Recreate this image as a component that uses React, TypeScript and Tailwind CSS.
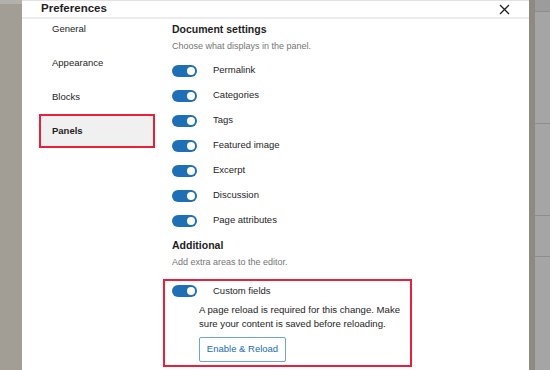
import React from 'react';

const docPanels = [
  'Permalink',
  'Categories',
  'Tags',
  'Featured image',
  'Excerpt',
  'Discussion',
  'Page attributes',
];

const navItems = ['General', 'Appearance', 'Blocks', 'Panels'];

function Toggle() {
  return (
    <div className="relative w-[25px] h-[12px] rounded-full bg-[#1e6fb5] shrink-0">
      <div className="absolute right-[2px] top-[2px] w-[8px] h-[8px] rounded-full bg-white" />
    </div>
  );
}

function ToggleRow({ label }: { label: string }) {
  return (
    <div className="flex items-center h-[25px] gap-[16px]">
      <Toggle />
      <span className="text-[9.5px] text-[#1e1e1e]">{label}</span>
    </div>
  );
}

export default function App() {
  return (
    <div
      className="flex w-[550px] h-[370px] overflow-hidden bg-[#a29e96]"
      style={{ fontFamily: '"Liberation Sans", Arial, sans-serif' }}
    >
      {/* backdrop, left */}
      <div className="w-[22px] shrink-0 flex flex-col">
        <div className="h-[4px] bg-[#b3b1ac]" />
        <div className="flex-1 bg-[#a29e96]" />
      </div>

      {/* modal */}
      <div className="w-[507px] shrink-0 bg-white flex flex-col border-t border-[#e2e2e2]">
        <div className="h-[18px] shrink-0 flex items-center justify-between pl-[19px] pr-[19px] border-b-2 border-[#ececec]">
          <span className="text-[11.5px] font-bold text-[#1e1e1e] leading-none">Preferences</span>
          <svg width="11" height="11" viewBox="0 0 11 11" className="text-[#1e1e1e]">
            <path d="M1 1L10 10M10 1L1 10" stroke="currentColor" strokeWidth="1.3" fill="none" />
          </svg>
        </div>

        <div className="flex flex-1">
          {/* nav */}
          <div className="w-[141px] shrink-0 pl-[17px] -mt-[7px] flex flex-col">
            {navItems.map((item) => {
              const active = item === 'Panels';
              return (
                <div
                  key={item}
                  className={
                    active
                      ? 'h-[34px] w-[116px] flex items-center pl-[11px] border-2 border-[#e8203c] bg-[#f0f0f0] text-[9.5px] font-bold text-[#1e1e1e]'
                      : 'h-[34px] w-[116px] flex items-center pl-[11px] border-2 border-transparent text-[9.5px] text-[#1e1e1e]'
                  }
                >
                  {item}
                </div>
              );
            })}
          </div>

          {/* content */}
          <div className="flex flex-col pl-[9px]">
            <div className="text-[10.5px] font-bold text-[#1e1e1e] leading-[20px] h-[20px]">Document settings</div>
            <div className="text-[9px] text-[#757575] leading-[14px] h-[14px]">Choose what displays in the panel.</div>
            <div className="mt-[5px] flex flex-col">
              {docPanels.map((p) => (
                <ToggleRow key={p} label={p} />
              ))}
            </div>
            <div className="mt-[4px] text-[10.5px] font-bold text-[#1e1e1e] leading-[16px] h-[16px]">Additional</div>
            <div className="mt-[2px] text-[9px] text-[#757575] leading-[14px] h-[14px]">Add extra areas to the editor.</div>

            <div className="mt-[10px] -ml-[9px] w-[249px] h-[88px] border-2 border-[#e8203c] pl-[7px] flex flex-col">
              <div className="h-[20px] flex items-center gap-[16px]">
                <Toggle />
                <span className="text-[9.5px] text-[#1e1e1e]">Custom fields</span>
              </div>
              <div className="mt-[2px] pl-[27px] text-[9.6px] text-[#1e1e1e] leading-[14px]">
                A page reload is required for this change. Make
                <br />
                sure your content is saved before reloading.
              </div>
              <div className="mt-[6px] ml-[27px] w-[87px] h-[25px] border border-[#6fa4d4] rounded-[2px] flex items-center justify-center text-[9.5px] text-[#1a6db5]">
                Enable &amp; Reload
              </div>
            </div>
          </div>
        </div>
      </div>

      {/* backdrop, right */}
      <div className="w-[6px] shrink-0 bg-[#8f8a81]" />
      <div className="flex-1 flex flex-col bg-[#a5a5a5]">
        <div className="h-[12px] bg-[#9c9c9c] border-b border-[#8e8e8e]" />
        <div className="h-[112px] border-b border-[#8e8e8e]" />
        <div className="h-[92px] border-b border-[#8e8e8e]" />
        <div className="h-[41px] border-b border-[#8e8e8e]" />
        <div className="flex-1" />
      </div>
    </div>
  );
}
